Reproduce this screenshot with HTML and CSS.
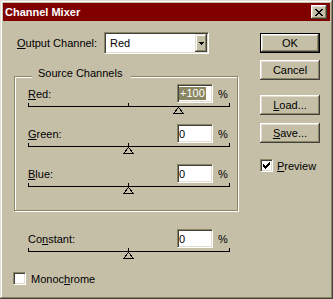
FILE: index.html
```html
<!DOCTYPE html>
<html lang="en">
<head>
    <meta charset="UTF-8">
    <meta name="viewport" content="width=device-width, initial-scale=1.0">
    <title>Channel Mixer</title>
    <link rel="stylesheet" href="styles.css">
</head>
<body>
    <div class="window">
        <div class="titlebar">
            <span class="title">Channel Mixer</span>
            <button class="close-btn">
                <svg width="8" height="7" viewBox="0 0 8 7" shape-rendering="crispEdges"><path d="M0 0h2v1H0zM6 0h2v1H6zM1 1h2v1H1zM5 1h2v1H5zM2 2h4v1H2zM3 3h2v1H3zM2 4h4v1H2zM1 5h2v1H1zM5 5h2v1H5zM0 6h2v1H0zM6 6h2v1H6z" fill="#000"/></svg>
            </button>
        </div>
        <div class="dialog">
            <div class="left-panel">
                <div class="output-row">
                    <label class="output-label"><u>O</u>utput Channel:</label>
                    <div class="select">
                        <span class="select-value">Red</span>
                        <span class="select-arrow">
                            <svg width="5" height="3" viewBox="0 0 5 3" shape-rendering="crispEdges"><path d="M0 0h5v1H0zM1 1h3v1H1zM2 2h1v1H2z" fill="#000"/></svg>
                        </span>
                    </div>
                </div>

                <div class="group">
                    <div class="group-title">Source Channels</div>
                    <div class="channel">
                        <div class="channel-row">
                            <label class="channel-label"><u>R</u>ed:</label>
                            <div class="field"><span class="selected">+100</span></div>
                            <span class="percent">%</span>
                        </div>
                        <div class="track">
                            <svg class="thumb" style="left: 75%" width="11" height="7" viewBox="0 0 11 7" shape-rendering="crispEdges"><polygon points="5.5,0.5 10.5,6.5 0.5,6.5" fill="#c6bfa8" stroke="#000"/></svg>
                        </div>
                    </div>
                    <div class="channel">
                        <div class="channel-row">
                            <label class="channel-label"><u>G</u>reen:</label>
                            <div class="field">0</div>
                            <span class="percent">%</span>
                        </div>
                        <div class="track">
                            <svg class="thumb" style="left: 50%" width="11" height="7" viewBox="0 0 11 7" shape-rendering="crispEdges"><polygon points="5.5,0.5 10.5,6.5 0.5,6.5" fill="#c6bfa8" stroke="#000"/></svg>
                        </div>
                    </div>
                    <div class="channel">
                        <div class="channel-row">
                            <label class="channel-label"><u>B</u>lue:</label>
                            <div class="field">0</div>
                            <span class="percent">%</span>
                        </div>
                        <div class="track">
                            <svg class="thumb" style="left: 50%" width="11" height="7" viewBox="0 0 11 7" shape-rendering="crispEdges"><polygon points="5.5,0.5 10.5,6.5 0.5,6.5" fill="#c6bfa8" stroke="#000"/></svg>
                        </div>
                    </div>
                </div>

                <div class="constant">
                    <div class="channel-row">
                        <label class="channel-label">Co<u>n</u>stant:</label>
                        <div class="field">0</div>
                        <span class="percent">%</span>
                    </div>
                    <div class="track">
                        <svg class="thumb" style="left: 50%" width="11" height="7" viewBox="0 0 11 7" shape-rendering="crispEdges"><polygon points="5.5,0.5 10.5,6.5 0.5,6.5" fill="#c6bfa8" stroke="#000"/></svg>
                    </div>
                </div>

                <div class="check-row mono">
                    <span class="check"></span>
                    <label>Monoc<u>h</u>rome</label>
                </div>
            </div>

            <div class="right-panel">
                <button class="btn btn-default">OK</button>
                <button class="btn btn-cancel">Cancel</button>
                <button class="btn btn-load"><u>L</u>oad...</button>
                <button class="btn btn-save"><u>S</u>ave...</button>
                <div class="check-row preview">
                    <span class="check">
                        <svg width="7" height="7" viewBox="0 0 7 7" shape-rendering="crispEdges"><path d="M6 0h1v1H6zM5 1h2v1H5zM0 2h1v1H0zM4 2h3v1H4zM0 3h2v1H0zM3 3h3v1H3zM0 4h5v1H0zM1 5h3v1H1zM2 6h1v1H2z" fill="#000"/></svg>
                    </span>
                    <label><u>P</u>review</label>
                </div>
            </div>
        </div>
    </div>
</body>
</html>
```

FILE: styles.css
```css
body {
    margin: 0;
    font-family: "Liberation Sans", Arial, sans-serif;
    font-size: 11px;
    color: #000;
    background-color: #c6bfa8;
}
.window {
    width: 333px;
    height: 299px;
    box-sizing: border-box;
    padding: 3px;
    background-color: #c6bfa8;
    box-shadow: inset -1px -1px #404040, inset 1px 1px #e1ddd0, inset -2px -2px #8a8662, inset 2px 2px #fff;
}
.titlebar {
    height: 18px;
    background-color: #800000;
    display: flex;
    align-items: center;
    justify-content: space-between;
    padding-left: 2px;
}
.title {
    color: #fff;
    font-weight: bold;
}
.close-btn {
    width: 16px;
    height: 14px;
    margin-right: 3px;
    padding: 0;
    border: none;
    background-color: #c6bfa8;
    display: flex;
    align-items: center;
    justify-content: center;
    box-shadow: inset -1px -1px #404040, inset 1px 1px #fff, inset -2px -2px #8a8662, inset 2px 2px #e1ddd0;
}
.dialog {
    display: flex;
    padding: 11px 0 0 11px;
}
.left-panel {
    width: 224px;
}
.right-panel {
    width: 60px;
    margin-left: 22px;
    padding-top: 1px;
    display: flex;
    flex-direction: column;
}
/* Output channel */
.output-row {
    display: flex;
    align-items: center;
    height: 22px;
}
.output-label {
    width: 90px;
    box-sizing: border-box;
    padding-left: 3px;
}
.select {
    width: 105px;
    height: 22px;
    box-sizing: border-box;
    display: flex;
    align-items: center;
    background-color: #fff;
    border: 1px solid;
    border-color: #8a8662 #fff #fff #8a8662;
    box-shadow: inset 1px 1px #404040, inset -1px -1px #e1ddd0;
    padding: 1px;
}
.select-value {
    flex-grow: 1;
    padding-left: 4px;
}
.select-arrow {
    width: 12px;
    height: 18px;
    display: flex;
    align-items: center;
    justify-content: center;
    background-color: #c6bfa8;
    box-shadow: inset -1px -1px #404040, inset 1px 1px #e1ddd0, inset -2px -2px #8a8662, inset 2px 2px #fff;
}
/* Group box */
.group {
    margin-top: 22px;
    border: 1px solid #8a8662;
    box-shadow: inset 1px 1px #fff, 1px 1px #fff;
    padding: 0 7px 23px 13px;
}
.group-title {
    display: table;
    margin: -10px 0 0 4px;
    padding: 0 9px 0 6px;
    line-height: 13px;
    background-color: #c6bfa8;
}
.channel {
    margin-top: 17px;
}
.group-title + .channel {
    margin-top: 4px;
}
.channel-row {
    display: flex;
    align-items: center;
    height: 19px;
}
.channel-label {
    flex-grow: 1;
}
.field {
    width: 36px;
    height: 19px;
    box-sizing: border-box;
    display: flex;
    align-items: center;
    padding-left: 1px;
    background-color: #fff;
    border: 1px solid;
    border-color: #8a8662 #fff #fff #8a8662;
    box-shadow: inset 1px 1px #404040, inset -1px -1px #e1ddd0;
}
.selected {
    display: inline-block;
    line-height: 13px;
    padding: 0 1px;
    background-color: #8a8662;
    color: #fff;
}
.percent {
    width: 12px;
    margin-left: 5px;
}
.track {
    position: relative;
    height: 3px;
    border: 1px solid #000;
    border-top: none;
    background: linear-gradient(#000, #000) no-repeat 99px 0 / 1px 100%;
}
.thumb {
    position: absolute;
    top: 4px;
    margin-left: -6px;
    display: block;
}
.constant {
    margin-top: 18px;
    padding: 0 8px 0 14px;
}
/* Checkboxes */
.check-row {
    display: flex;
    align-items: center;
}
.check {
    width: 13px;
    height: 13px;
    box-sizing: border-box;
    display: flex;
    align-items: center;
    justify-content: center;
    background-color: #fff;
    border: 1px solid;
    border-color: #8a8662 #fff #fff #8a8662;
    box-shadow: inset 1px 1px #404040, inset -1px -1px #e1ddd0;
}
.mono {
    margin: 20px 0 0 -1px;
}
.mono label {
    margin-left: 5px;
}
.preview {
    margin-top: 16px;
}
.preview label {
    margin-left: 4px;
}
/* Buttons */
.btn {
    width: 60px;
    height: 20px;
    box-sizing: border-box;
    padding: 0;
    border: none;
    font: inherit;
    color: #000;
    background-color: #c6bfa8;
    box-shadow: inset -1px -1px #404040, inset 1px 1px #fff, inset -2px -2px #8a8662, inset 2px 2px #e1ddd0;
}
.btn-default {
    border: 1px solid #000;
}
.btn-cancel {
    margin-top: 7px;
}
.btn-load {
    margin-top: 15px;
}
.btn-save {
    margin-top: 8px;
}
```
